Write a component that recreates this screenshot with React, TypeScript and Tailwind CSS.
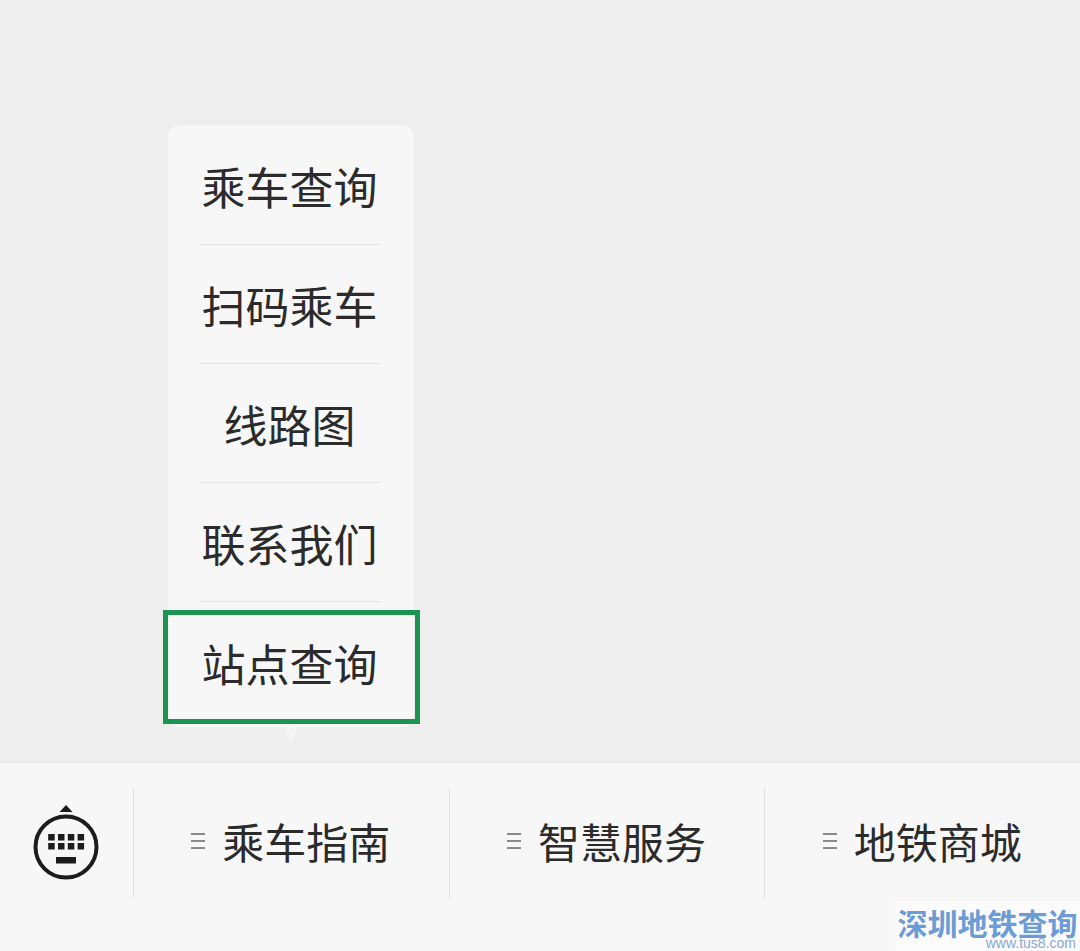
const menuItems = ["乘车查询", "扫码乘车", "线路图", "联系我们", "站点查询"];

const tabs = ["乘车指南", "智慧服务", "地铁商城"];

const cjk = "font-['Noto_Sans_CJK_SC','Noto_Sans_CJK_JP',sans-serif]";

const KeyboardIcon = () => {
  const keys = [0, 1, 2, 3];
  return (
    <svg width="66" height="76" viewBox="0 0 66 76" fill="none">
      <path d="M33 0 L39.5 7 L26.5 7 Z" fill="#1c1c1c" />
      <circle cx="33" cy="42" r="30.5" stroke="#1c1c1c" strokeWidth="4" />
      {keys.map((k) => (
        <rect key={`a${k}`} x={15.2 + k * 9.8} y={29} width="6.5" height="6.5" fill="#1c1c1c" />
      ))}
      {keys.map((k) => (
        <rect key={`b${k}`} x={15.2 + k * 9.8} y={38} width="6.5" height="6.5" fill="#1c1c1c" />
      ))}
      <rect x="23" y="52" width="20" height="6.5" fill="#1c1c1c" />
    </svg>
  );
};

const MenuIcon = () => (
  <div className="flex flex-col gap-[5px] w-[14px] ml-[2px] mr-[17px]">
    <div className="h-[2px] bg-[#8a8a8a]" />
    <div className="h-[2px] bg-[#8a8a8a]" />
    <div className="h-[2px] bg-[#8a8a8a]" />
  </div>
);

export default function App() {
  return (
    <div className={`relative w-[1080px] h-[951px] overflow-hidden bg-[#eeeeee] flex flex-col ${cjk}`}>
      <div className="h-[762px] pt-[125px] pl-[168px]">
        <div className="relative w-[246px] h-[602px] pt-[1px] bg-[#f7f7f7] rounded-[12px] flex flex-col items-center">
          {menuItems.map((item, i) => (
            <div
              key={item}
              className={`relative w-[181px] h-[119px] mr-[1px] pt-[2px] pr-[2px] flex items-center justify-center text-[44px] leading-none text-[#2b2b2b] ${
                i < menuItems.length - 1 ? "border-b border-[#e3e3e3]" : ""
              }`}
            >
              {item}
              {i === menuItems.length - 1 && (
                <div className="absolute left-[-37px] top-[8px] w-[257px] h-[114px] border-[5px] border-[#1a9450]" />
              )}
            </div>
          ))}
          <div className="absolute left-[116px] bottom-[-18px] w-0 h-0 border-x-[7px] border-x-transparent border-t-[18px] border-t-[#f5f5f5]" />
        </div>
      </div>
      <div className="flex-1 bg-[#f7f7f7] border-t border-[#e4e4e4] flex pt-[25px] items-start">
        <div className="w-[133px] h-[110px] flex items-start justify-center pt-[17px]">
          <KeyboardIcon />
        </div>
        {tabs.map((tab) => (
          <div
            key={tab}
            className="w-[316px] h-[110px] pb-[4px] border-l border-[#dedede] flex items-center justify-center pr-[3px] text-[42px] leading-none text-[#2b2b2b]"
          >
            <MenuIcon />
            {tab}
          </div>
        ))}
      </div>
      <div className="absolute right-0 bottom-0 w-[185px] h-[50px] bg-[#fbfbfb] flex flex-col items-center pt-[6px]">
        <div className="h-[30px] text-[30px] leading-[30px] font-bold text-[#6d9bd6] whitespace-nowrap">深圳地铁查询</div>
        <div className="self-end pr-[4px] text-[14px] leading-[13px] text-[#8aa8d0] font-['Liberation_Sans',sans-serif]">
          www.tus8.com
        </div>
      </div>
    </div>
  );
}
